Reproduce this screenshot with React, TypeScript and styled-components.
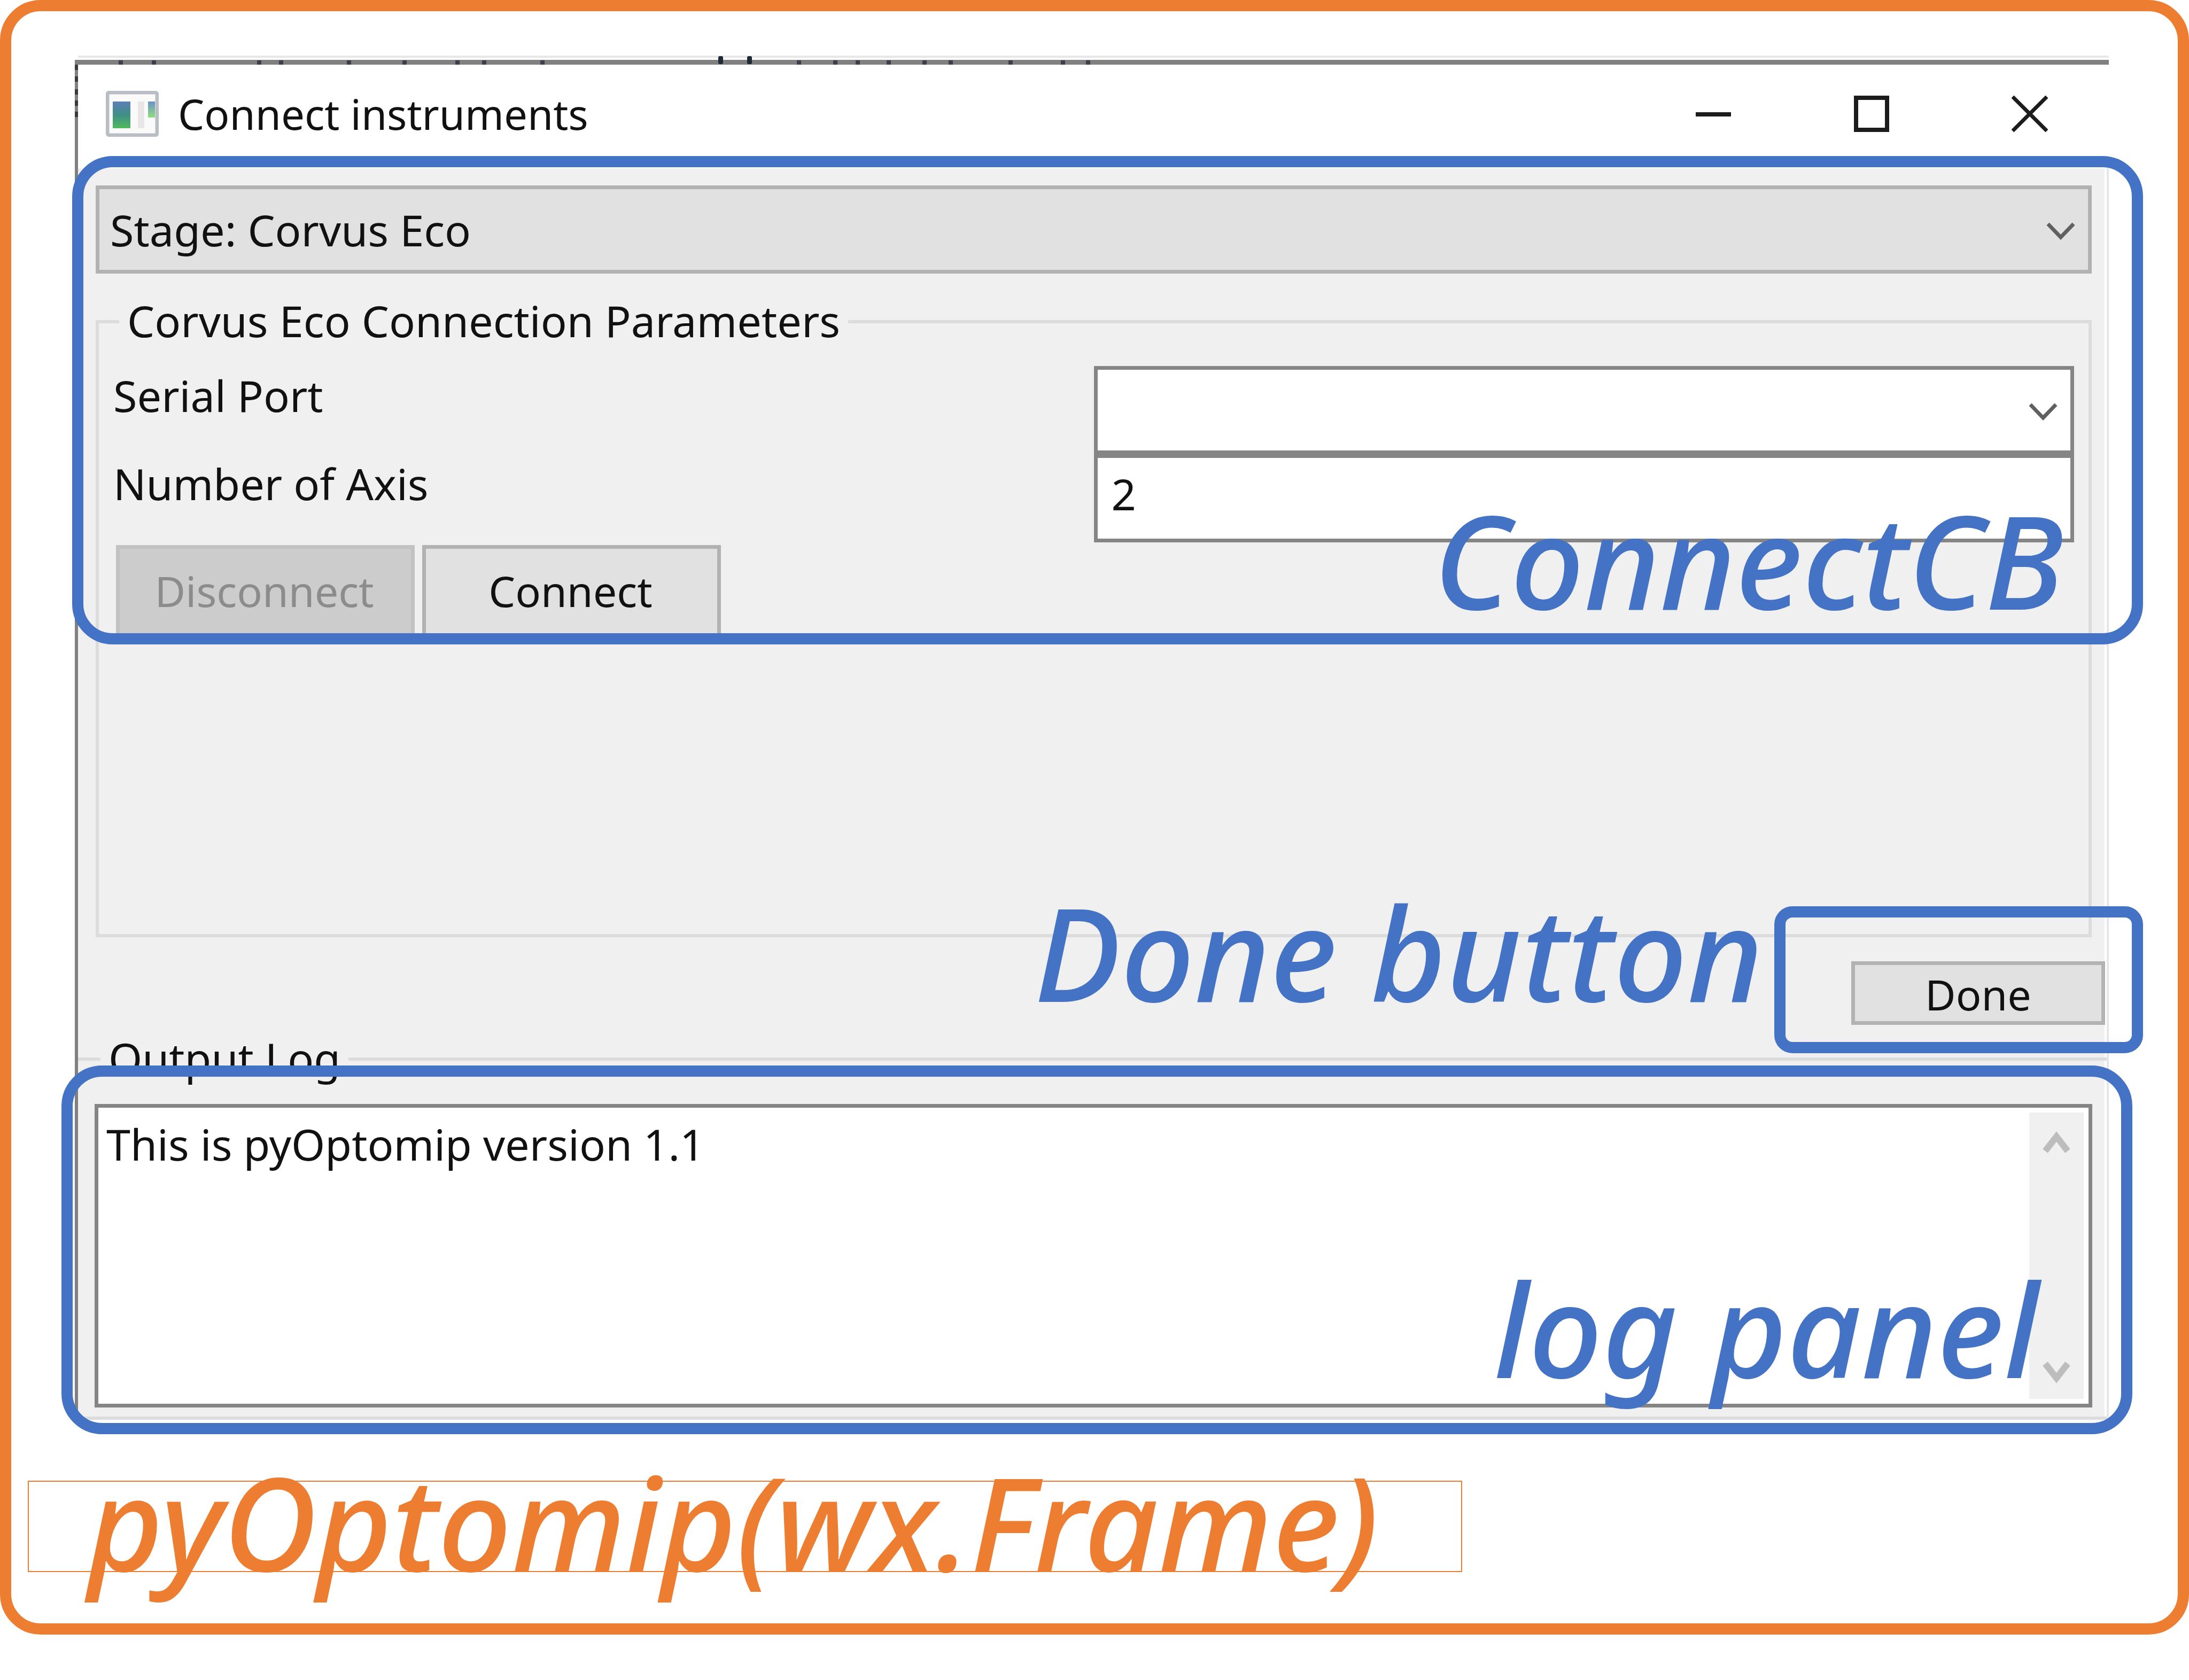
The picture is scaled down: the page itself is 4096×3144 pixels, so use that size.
import React from "react";
import styled, { createGlobalStyle, css } from "styled-components";

const BLUE = "#4472c4";
const ORANGE = "#ed7d31";
const UI_FONT = '"Noto Sans", "Open Sans", sans-serif';

const GlobalStyle = createGlobalStyle`
  * { box-sizing: border-box; }
  body { margin: 0; background: #fff; }
  button, input, select, textarea {
    font: inherit;
    color: inherit;
    margin: 0;
    border-radius: 0;
    outline: none;
  }
`;

const Frame = styled.main`
  display: flex;
  flex-direction: column;
  border: 21px solid ${ORANGE};
  border-radius: 76px;
  padding-bottom: 96px;
  background: #fff;
  font-family: ${UI_FONT};
`;

const AppWindow = styled.section`
  position: relative;
  display: flex;
  flex-direction: column;
  margin: 91px 129px 0 119px;
  border-top: 9px solid #808080;
  border-left: 6px solid #808080;
  font-size: 81px;
  line-height: 110px;
  color: #111;
  &::before {
    content: "";
    position: absolute;
    top: -17px;
    left: 0;
    right: 0;
    height: 4px;
    background: #e8e8e8;
  }
`;

const EdgeMarks = styled.svg`
  position: absolute;
  top: -17px;
  left: -6px;
  pointer-events: none;
`;

const TitleBar = styled.header`
  display: flex;
  align-items: center;
  height: 194px;
  padding: 0 0 10px 52px;
  background: #fff;
`;

const Title = styled.h1`
  flex: 1;
  margin: 0 0 0 36px;
  font-size: 78px;
  font-weight: 400;
`;

const CaptionButton = styled.button`
  display: flex;
  align-items: center;
  justify-content: center;
  width: 296px;
  height: 110px;
  padding: 0;
  border: 0;
  background: none;
`;

const Body = styled.div`
  display: flex;
  flex-direction: column;
  border-right: 4px solid #e6e6e6;
  box-shadow: inset -4px 0 #fff;
  background: #f0f0f0;
`;

const Connection = styled.div`
  display: flex;
  flex-direction: column;
  gap: 35px;
  padding: 32px 28px 0 33px;
`;

const SelectShell = styled.div`
  display: grid;
  align-items: center;
  > * { grid-area: 1 / 1; }
`;

const Select = styled.select<{ $filled?: boolean }>`
  appearance: none;
  width: 100%;
  height: 165px;
  padding: 0 100px 0 20px;
  border: 7px solid ${(p) => (p.$filled ? "#b2b2b2" : "#858585")};
  background: ${(p) => (p.$filled ? "#e1e1e1" : "#fff")};
`;

const SelectArrow = styled.svg`
  justify-self: end;
  width: 54px;
  height: 34px;
  margin: 4px 31px 0 0;
  pointer-events: none;
`;

const groupLine = "6px solid #dcdcdc";

const ParameterGroup = styled.fieldset`
  min-width: 0;
  min-height: 1207px;
  margin: 0;
  padding: 28px 27px 0;
  border: ${groupLine};
`;

const LogGroup = styled.fieldset`
  min-width: 0;
  margin: 9px 0 0;
  padding: 29px 27px 17px 31px;
  border: ${groupLine};
  border-width: 6px 0;
`;

const Legend = styled.legend`
  margin-left: 11px;
  padding: 0 15px 4px;
  line-height: 106px;
`;

const Fields = styled.div`
  display: grid;
  grid-template-columns: 1fr 1fr;
  align-items: start;
`;

const TextInput = styled.input`
  width: 100%;
  height: 165px;
  padding: 0 26px 18px;
  border: 7px solid #858585;
  background: #fff;
`;

const ButtonRow = styled.div`
  display: flex;
  gap: 14px;
  padding: 5px 5px 0;
`;

const pushButton = css`
  border: 7px solid #b2b2b2;
  background: #e1e1e1;
  font-size: 79px;
  text-align: center;
`;

const ActionButton = styled.button`
  ${pushButton}
  width: 559px;
  height: 181px;
  padding: 0 4px 10px 0;
  &:disabled {
    border-color: #c2c2c2;
    background: #ccc;
    color: #8c8c8c;
  }
`;

const DoneRow = styled.div`
  display: flex;
  justify-content: flex-end;
  padding: 45px 3px 0 0;
`;

const DoneButton = styled.button`
  ${pushButton}
  width: 475px;
  height: 119px;
  padding: 4px 0 0;
  line-height: 100px;
`;

const LogBox = styled.div`
  display: flex;
  height: 568px;
  border: 7px solid #858585;
  background: #fff;
`;

const LogText = styled.textarea`
  flex: 1;
  resize: none;
  border: 0;
  padding: 13px 15px;
  background: none;
  overflow: hidden;
`;

const ScrollBar = styled.div`
  display: flex;
  flex-direction: column;
  justify-content: space-between;
  width: 102px;
  margin: 9px;
  background: #f0f0f0;
`;

const ScrollButton = styled.button`
  display: flex;
  align-items: center;
  justify-content: center;
  height: 104px;
  padding: 6px 0 0;
  border: 0;
  background: none;
`;

const noteText = css`
  font-size: 242px;
  font-style: italic;
  font-weight: 500;
  line-height: 240px;
  white-space: nowrap;
`;

const Outline = styled.div`
  position: absolute;
  display: flex;
  align-items: flex-end;
  justify-content: flex-end;
  border: 21px solid ${BLUE};
  border-radius: 76px;
  color: ${BLUE};
  pointer-events: none;
`;

const ConnectOutline = styled(Outline)`
  top: 171px;
  left: -11px;
  right: -64px;
  height: 914px;
  padding: 0 128px 18px 0;
`;

const DoneOutline = styled(Outline)`
  top: 1575px;
  right: -64px;
  width: 690px;
  height: 275px;
  border-radius: 34px;
`;

const LogOutline = styled(Outline)`
  top: 1873px;
  left: -31px;
  right: -44px;
  height: 690px;
  padding: 0 154px 58px 0;
`;

const Note = styled.span`
  ${noteText}
`;

const SideNote = styled(Note)`
  position: absolute;
  right: calc(100% + 42px);
  bottom: 49px;
`;

const FrameCaption = styled.h2`
  ${noteText}
  align-self: flex-start;
  min-width: 66.2%;
  margin: 114px 0 0 31px;
  padding: 0 110px 19px;
  border: 2px solid ${ORANGE};
  line-height: 148px;
  color: ${ORANGE};
`;

const AppIcon = () => (
  <svg width="99" height="86" viewBox="0 0 99 86" aria-hidden="true">
    <defs>
      <linearGradient id="pane" x1="0" y1="0" x2="0" y2="1">
        <stop offset="0" stopColor="#5b7fb5" />
        <stop offset="0.5" stopColor="#3f8f86" />
        <stop offset="1" stopColor="#52b95c" />
      </linearGradient>
      <linearGradient id="pane2" x1="0" y1="0" x2="0" y2="1">
        <stop offset="0" stopColor="#6a8fc8" />
        <stop offset="1" stopColor="#8fe07c" />
      </linearGradient>
    </defs>
    <rect x="3" y="3" width="93" height="80" rx="4" fill="#fafafa" stroke="#b9bdc4" strokeWidth="7" />
    <rect x="13" y="20" width="33" height="50" fill="url(#pane)" />
    <rect x="60" y="20" width="12" height="50" fill="#e8e6e6" />
    <rect x="79" y="20" width="13" height="30" fill="url(#pane2)" />
  </svg>
);

const topMarks = [
  86, 148, 345, 386, 513, 617, 716, 766, 875, 1355, 1423, 1465, 1523, 1590, 1639, 1751, 1849, 1896,
];
const tallMarks = [1209, 1263];
const sideMarks = [17, 39, 63, 84, 105];

const EdgeRemnants = () => (
  <EdgeMarks width="2000" height="140" viewBox="0 0 2000 140" aria-hidden="true">
    {topMarks.map((x) => (
      <rect key={x} x={x - 4} y="9" width="8" height="8" fill="#3d3f4c" />
    ))}
    {tallMarks.map((x) => (
      <rect key={x} x={x - 5} y="1" width="9" height="15" rx="3" fill="#1d2a38" />
    ))}
    {sideMarks.map((y) => (
      <rect key={y} x="0" y={y} width="6" height="10" fill="#3a3a3a" />
    ))}
  </EdgeMarks>
);

const DownArrow = () => (
  <SelectArrow viewBox="0 0 54 34" aria-hidden="true">
    <path d="M3 4L27 29L51 4" fill="none" stroke="#606060" strokeWidth="7" />
  </SelectArrow>
);

const ScrollArrow = ({ d }: { d: string }) => (
  <svg width="50" height="42" viewBox="0 0 50 42" aria-hidden="true">
    <path d={d} fill="none" stroke="#bdbdbd" strokeWidth="12" />
  </svg>
);

export default function App() {
  return (
    <>
      <GlobalStyle />
      <Frame>
        <AppWindow>
          <EdgeRemnants />
          <TitleBar>
            <AppIcon />
            <Title>Connect instruments</Title>
            <CaptionButton aria-label="Minimize">
              <svg width="66" height="68" viewBox="0 0 66 68">
                <path d="M0 35H66" stroke="#1c1c1c" strokeWidth="8" />
              </svg>
            </CaptionButton>
            <CaptionButton aria-label="Maximize">
              <svg width="66" height="68" viewBox="0 0 66 68">
                <rect x="4" y="4" width="58" height="60" fill="none" stroke="#1c1c1c" strokeWidth="8" />
              </svg>
            </CaptionButton>
            <CaptionButton aria-label="Close">
              <svg width="68" height="68" viewBox="0 0 68 68">
                <path d="M2 2L66 66M66 2L2 66" stroke="#1c1c1c" strokeWidth="7" />
              </svg>
            </CaptionButton>
          </TitleBar>
          <Body>
            <Connection>
              <SelectShell>
                <Select $filled aria-label="Instrument">
                  <option>Stage: Corvus Eco</option>
                </Select>
                <DownArrow />
              </SelectShell>
              <ParameterGroup>
                <Legend>Corvus Eco Connection Parameters</Legend>
                <Fields>
                  <label htmlFor="port">Serial Port</label>
                  <SelectShell>
                    <Select id="port">
                      <option></option>
                    </Select>
                    <DownArrow />
                  </SelectShell>
                  <label htmlFor="axes">Number of Axis</label>
                  <TextInput id="axes" defaultValue="2" />
                </Fields>
                <ButtonRow>
                  <ActionButton disabled>Disconnect</ActionButton>
                  <ActionButton>Connect</ActionButton>
                </ButtonRow>
              </ParameterGroup>
            </Connection>
            <DoneRow>
              <DoneButton>Done</DoneButton>
            </DoneRow>
            <LogGroup>
              <Legend>Output Log</Legend>
              <LogBox>
                <LogText readOnly aria-label="Output log" defaultValue="This is pyOptomip version 1.1" />
                <ScrollBar>
                  <ScrollButton aria-label="Scroll up">
                    <ScrollArrow d="M4 38L25 11L46 38" />
                  </ScrollButton>
                  <ScrollButton aria-label="Scroll down">
                    <ScrollArrow d="M4 4L25 31L46 4" />
                  </ScrollButton>
                </ScrollBar>
              </LogBox>
            </LogGroup>
          </Body>
          <ConnectOutline>
            <Note>ConnectCB</Note>
          </ConnectOutline>
          <DoneOutline>
            <SideNote>Done button</SideNote>
          </DoneOutline>
          <LogOutline>
            <Note>log panel</Note>
          </LogOutline>
        </AppWindow>
        <FrameCaption>pyOptomip(wx.Frame)</FrameCaption>
      </Frame>
    </>
  );
}
